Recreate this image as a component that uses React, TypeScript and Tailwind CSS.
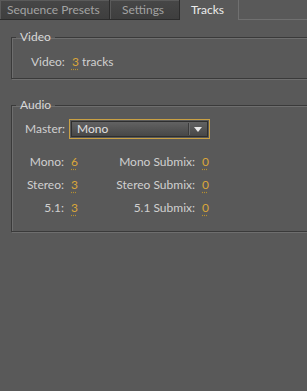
import React from "react";

const Num = ({ value }: { value: string }) => (
  <span className="text-[#d9a73a] underline decoration-dotted decoration-[#b8902f] underline-offset-[3px]">
    {value}
  </span>
);

const Tab = ({ label, width, pad, active }: { label: string; width: string; pad: string; active?: boolean }) => (
  <div
    className={
      active
        ? `h-[20px] ${width} ${pad} flex items-center border-r border-[#707070] bg-[#595959] text-[#ececec]`
        : `h-[20px] ${width} ${pad} flex items-center border-r border-b border-[#2c2c2c] bg-gradient-to-b from-[#474747] to-[#3e3e3e] text-[#a2a2a2] shadow-[inset_1px_1px_0_#5a5a5a]`
    }
  >
    {label}
  </div>
);

const rows = [
  { name: "Mono:", count: "6", submix: "Mono Submix:", sub: "0" },
  { name: "Stereo:", count: "3", submix: "Stereo Submix:", sub: "0" },
  { name: "5.1:", count: "3", submix: "5.1 Submix:", sub: "0" },
];

export default function App() {
  return (
    <div
      className="w-[307px] h-[391px] overflow-hidden bg-[#595959] text-[12px] leading-[16px] text-[#d0d0d0]"
      style={{ fontFamily: "Lato, 'Open Sans', sans-serif" }}
    >
      <div className="flex">
        <Tab label="Sequence Presets" width="w-[110px]" pad="pl-[7px]" />
        <Tab label="Settings" width="w-[70px]" pad="pl-[12px]" />
        <Tab label="Tracks" width="w-[59px]" pad="pl-[11px]" active />
        <div className="flex-1 border-b border-[#707070]" />
      </div>

      <div className="pl-[11px] pt-[10px] flex flex-col gap-[19px]">
        <fieldset className="w-[310px] h-[49px] border border-[#3a3a3a] shadow-[inset_1px_1px_0_#6e6e6e,1px_1px_0_#6e6e6e]">
          <legend className="ml-[4px] px-[4px] text-[#d8d8d8] leading-[14px]">Video</legend>
          <div className="flex items-center gap-[7px] pt-[10px] pl-[19px]">
            <span>Video:</span>
            <span>
              <Num value="3" /> tracks
            </span>
          </div>
        </fieldset>

        <fieldset className="w-[310px] h-[134px] border border-[#3a3a3a] shadow-[inset_1px_1px_0_#6e6e6e,1px_1px_0_#6e6e6e]">
          <legend className="ml-[4px] px-[4px] text-[#d8d8d8] leading-[14px]">Audio</legend>
          <div className="flex items-center pl-[13px] pt-[7px] gap-[4px]">
            <span>Master:</span>
            <div className="w-[141px] h-[20px] border border-[#c9a043] p-[1px]">
              <div className="h-full flex items-center bg-gradient-to-b from-[#626262] to-[#474747] border border-[#2e2e2e]">
                <span className="flex-1 pl-[5px] text-[#e0e0e0]">Mono</span>
                <div className="w-px h-[12px] bg-[#3a3a3a] shadow-[1px_0_0_#6a6a6a]" />
                <div className="w-[18px] flex justify-center">
                  <svg width="8" height="5" viewBox="0 0 8 5">
                    <path d="M0 0H8L4 5Z" fill="#e8e8e8" />
                  </svg>
                </div>
              </div>
            </div>
          </div>
          <div className="grid grid-cols-[52px_14px_103px_14px] gap-x-[7px] gap-y-[7px] pt-[15px]">
            {rows.map((r) => (
              <React.Fragment key={r.name}>
                <span className="text-right">{r.name}</span>
                <Num value={r.count} />
                <span className="text-right">{r.submix}</span>
                <Num value={r.sub} />
              </React.Fragment>
            ))}
          </div>
        </fieldset>
      </div>
    </div>
  );
}
